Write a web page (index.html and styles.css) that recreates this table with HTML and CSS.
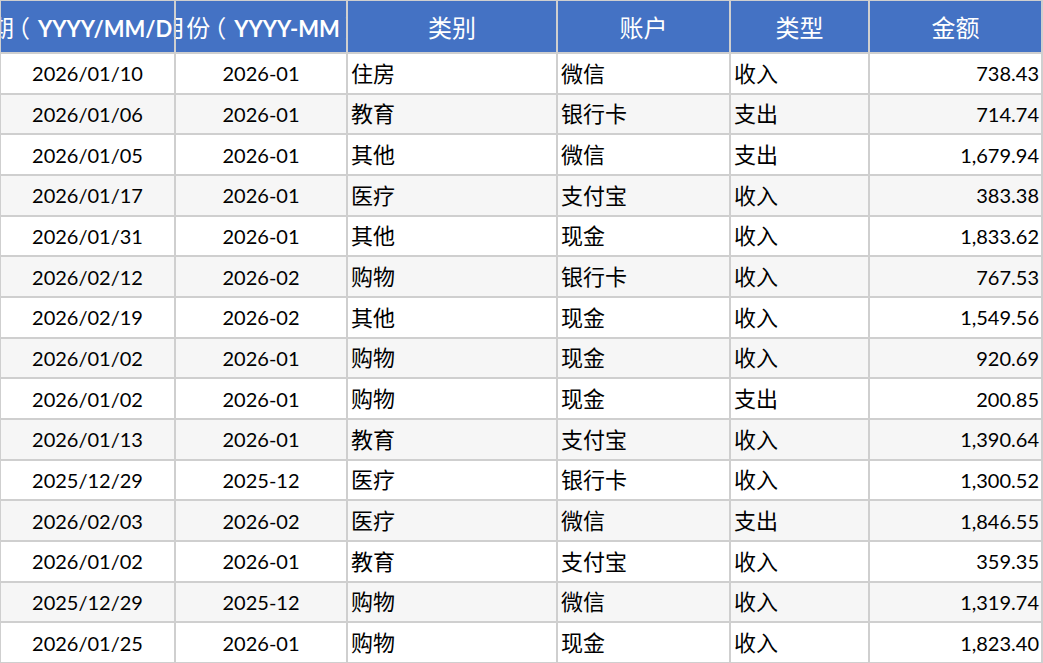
FILE: index.html
```html
<!DOCTYPE html>
<html lang="zh">
<head>
<meta charset="utf-8">
<title>账目</title>
<link rel="stylesheet" href="styles.css">
</head>
<body>
<div class="sheet">
  <div class="hd"><span class="in"><span class="cjk">日期</span><span class="cjk op">（</span>YYYY/MM/DD<span class="cjk cp">）</span></span></div>
  <div class="hd"><span class="in"><span class="cjk">月份</span><span class="cjk op">（</span>YYYY-MM<span class="cjk cp">）</span></span></div>
  <div class="hd"><span class="in cjk">类别</span></div>
  <div class="hd"><span class="in cjk">账户</span></div>
  <div class="hd"><span class="in cjk">类型</span></div>
  <div class="hd"><span class="in cjk">金额</span></div>

  <div class="c ctr">2026/01/10</div><div class="c ctr">2026-01</div><div class="c zh">住房</div><div class="c zh">微信</div><div class="c zh">收入</div><div class="c num">738.43</div>
  <div class="c ctr alt">2026/01/06</div><div class="c ctr alt">2026-01</div><div class="c zh alt">教育</div><div class="c zh alt">银行卡</div><div class="c zh alt">支出</div><div class="c num alt">714.74</div>
  <div class="c ctr">2026/01/05</div><div class="c ctr">2026-01</div><div class="c zh">其他</div><div class="c zh">微信</div><div class="c zh">支出</div><div class="c num">1,679.94</div>
  <div class="c ctr alt">2026/01/17</div><div class="c ctr alt">2026-01</div><div class="c zh alt">医疗</div><div class="c zh alt">支付宝</div><div class="c zh alt">收入</div><div class="c num alt">383.38</div>
  <div class="c ctr">2026/01/31</div><div class="c ctr">2026-01</div><div class="c zh">其他</div><div class="c zh">现金</div><div class="c zh">收入</div><div class="c num">1,833.62</div>
  <div class="c ctr alt">2026/02/12</div><div class="c ctr alt">2026-02</div><div class="c zh alt">购物</div><div class="c zh alt">银行卡</div><div class="c zh alt">收入</div><div class="c num alt">767.53</div>
  <div class="c ctr">2026/02/19</div><div class="c ctr">2026-02</div><div class="c zh">其他</div><div class="c zh">现金</div><div class="c zh">收入</div><div class="c num">1,549.56</div>
  <div class="c ctr alt">2026/01/02</div><div class="c ctr alt">2026-01</div><div class="c zh alt">购物</div><div class="c zh alt">现金</div><div class="c zh alt">收入</div><div class="c num alt">920.69</div>
  <div class="c ctr">2026/01/02</div><div class="c ctr">2026-01</div><div class="c zh">购物</div><div class="c zh">现金</div><div class="c zh">支出</div><div class="c num">200.85</div>
  <div class="c ctr alt">2026/01/13</div><div class="c ctr alt">2026-01</div><div class="c zh alt">教育</div><div class="c zh alt">支付宝</div><div class="c zh alt">收入</div><div class="c num alt">1,390.64</div>
  <div class="c ctr">2025/12/29</div><div class="c ctr">2025-12</div><div class="c zh">医疗</div><div class="c zh">银行卡</div><div class="c zh">收入</div><div class="c num">1,300.52</div>
  <div class="c ctr alt">2026/02/03</div><div class="c ctr alt">2026-02</div><div class="c zh alt">医疗</div><div class="c zh alt">微信</div><div class="c zh alt">支出</div><div class="c num alt">1,846.55</div>
  <div class="c ctr">2026/01/02</div><div class="c ctr">2026-01</div><div class="c zh">教育</div><div class="c zh">支付宝</div><div class="c zh">收入</div><div class="c num">359.35</div>
  <div class="c ctr alt">2025/12/29</div><div class="c ctr alt">2025-12</div><div class="c zh alt">购物</div><div class="c zh alt">微信</div><div class="c zh alt">收入</div><div class="c num alt">1,319.74</div>
  <div class="c ctr">2026/01/25</div><div class="c ctr">2026-01</div><div class="c zh">购物</div><div class="c zh">现金</div><div class="c zh">收入</div><div class="c num">1,823.40</div>
</div>
</body>
</html>
```

FILE: styles.css
```css
html, body {
  margin: 0;
  padding: 0;
  background: #ffffff;
}

.sheet {
  width: 1043px;
  height: 663px;
  box-sizing: border-box;
  padding: 1px 2px 1px 1px;
  display: grid;
  grid-template-columns: 173px 170px 208px 171px 137px 171px;
  grid-template-rows: 51px repeat(15, 38.66px);
  gap: 2px;
  background: #cfcfcf;
  font-family: Lato, "Noto Sans CJK SC", sans-serif;
  font-size: 20px;
  color: #000;
  overflow: hidden;
}

.hd {
  background: #4472c4;
  color: #ffffff;
  font-weight: 700;
  font-size: 22px;
  display: flex;
  align-items: center;
  justify-content: center;
  overflow: hidden;
  white-space: nowrap;
}

.hd .in {
  flex: none;
}

.cjk {
  font-weight: 400;
  font-size: 24px;
  font-family: "Noto Sans CJK SC", sans-serif;
}

.cjk.op {
  margin-left: -8px;
  margin-right: 8px;
}

.cjk.cp {
  margin-left: 5px;
  margin-right: -9px;
}

.c {
  background: #ffffff;
  display: flex;
  align-items: center;
  padding: 0 3px;
  white-space: nowrap;
  overflow: hidden;
}

.c.zh {
  font-size: 22px;
  font-family: "Noto Sans CJK SC", sans-serif;
  padding-bottom: 3px;
}

.c.alt {
  background: #f6f6f6;
}

.ctr {
  justify-content: center;
}

.num {
  justify-content: flex-end;
  padding-right: 2px;
}
```
